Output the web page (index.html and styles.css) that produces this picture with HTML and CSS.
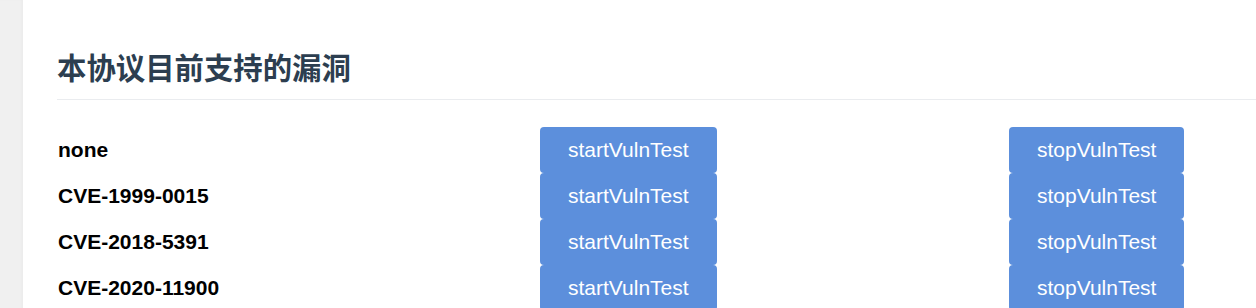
FILE: index.html
```html
<!DOCTYPE html>
<html lang="zh-CN">
<head>
<meta charset="utf-8">
<title>漏洞</title>
<link rel="stylesheet" href="styles.css">
</head>
<body>
<div class="layout">
  <aside class="side"></aside>
  <main class="main">
    <h2 class="title">本协议目前支持的漏洞</h2>
    <div class="vuln-list">
      <div class="label">none</div>
      <div class="cell"><button class="btn">startVulnTest</button></div>
      <div class="cell"><button class="btn">stopVulnTest</button></div>
      <div class="label">CVE-1999-0015</div>
      <div class="cell"><button class="btn">startVulnTest</button></div>
      <div class="cell"><button class="btn">stopVulnTest</button></div>
      <div class="label">CVE-2018-5391</div>
      <div class="cell"><button class="btn">startVulnTest</button></div>
      <div class="cell"><button class="btn">stopVulnTest</button></div>
      <div class="label">CVE-2020-11900</div>
      <div class="cell"><button class="btn">startVulnTest</button></div>
      <div class="cell"><button class="btn">stopVulnTest</button></div>
    </div>
  </main>
</div>
</body>
</html>
```
FILE: styles.css
```css
html, body {
  margin: 0;
  padding: 0;
  background: #ffffff;
  overflow: hidden;
}
.layout {
  display: flex;
  min-height: 308px;
}
.side {
  width: 23px;
  flex: none;
  background: #f0f0f0;
  box-shadow: inset -2px 0 2px rgba(0,0,0,0.02);
}
.main {
  flex: 1;
  padding: 48px 0 0 34px;
}
.title {
  margin: 0;
  padding: 0 0 15px 0;
  font-family: "Noto Sans CJK SC", "Noto Sans", sans-serif;
  font-weight: 700;
  font-size: 29.4px;
  line-height: 36px;
  color: #2c3e50;
  border-bottom: 1px solid #eaecef;
}
.vuln-list {
  margin-top: 27px;
  display: grid;
  grid-template-columns: 483px 469px 1fr;
  grid-auto-rows: 46px;
  align-items: center;
}
.label {
  font-family: "Liberation Sans", Arial, sans-serif;
  font-weight: 700;
  font-size: 21px;
  color: #000;
  padding-left: 1px;
}
.cell {
  display: flex;
  height: 46px;
}
.btn {
  height: 46px;
  padding: 0 28px;
  border: none;
  border-radius: 4px;
  background: #5c8fdc;
  color: #ffffff;
  font-family: "Liberation Sans", Arial, sans-serif;
  font-size: 21px;
  cursor: pointer;
}
```
